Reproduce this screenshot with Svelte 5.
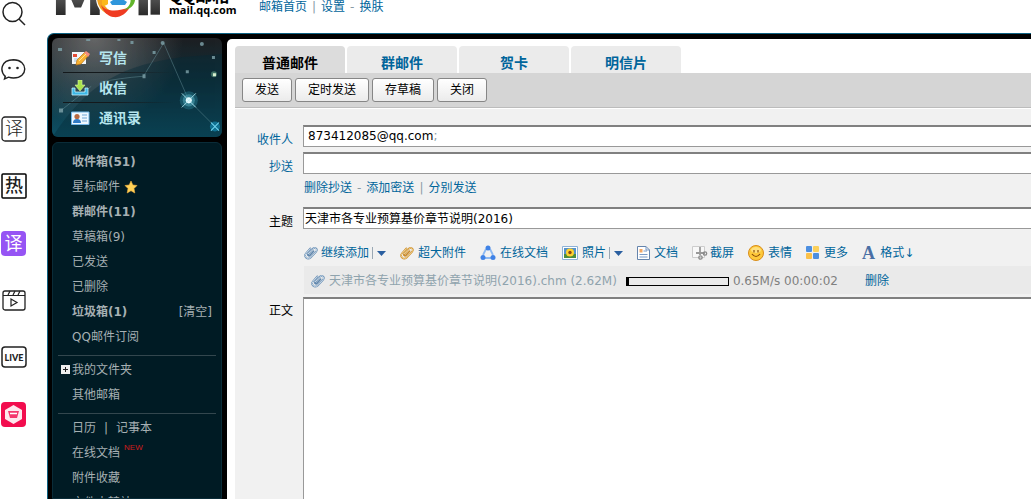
<script lang="ts">
	const dock = ['search', 'chat', 'translate', 'hot', 'translate-alt', 'video', 'live', 'shop'];

	const actions = [
		{ icon: 'write', label: '写信' },
		{ icon: 'inbox', label: '收信' },
		{ icon: 'contacts', label: '通讯录' }
	];

	const folders = [
		{ label: '收件箱(51)', unread: true },
		{ label: '星标邮件', star: true },
		{ label: '群邮件(11)', unread: true },
		{ label: '草稿箱(9)' },
		{ label: '已发送' },
		{ label: '已删除' },
		{ label: '垃圾箱(1)', unread: true, clear: true },
		{ label: 'QQ邮件订阅' }
	];

	const tabs = ['普通邮件', '群邮件', '贺卡', '明信片'];
	const buttons = ['发送', '定时发送', '存草稿', '关闭'];

	// w is the natural width of each icon
	const tools = [
		{ icon: 'clip', w: 13, label: '继续添加', menu: true },
		{ icon: 'clip-gold', w: 14, label: '超大附件' },
		{ icon: 'share', w: 16, label: '在线文档' },
		{ icon: 'photo', w: 16, label: '照片', menu: true },
		{ icon: 'doc', w: 13, label: '文档' },
		{ icon: 'cut', w: 14, label: '截屏' },
		{ icon: 'smile', w: 16, label: '表情' },
		{ icon: 'more', w: 14, label: '更多' },
		{ icon: 'font', w: 14, label: '格式↓' }
	];

	let activeTab = $state(0);
	let to = $state('');
	let cc = $state('');
	let subject = $state('天津市各专业预算基价章节说明(2016)');
	let body = $state('');
	const progress = 2;
</script>

{#snippet clip(color: string, light: string)}
	<g fill="none" stroke-linecap="round" transform="rotate(42 7 8)">
		<path d="M3.500 5v6.500a3.200 3.200 0 0 0 6.400 0V3.500a2.200 2.200 0 0 0-4.400 0V10.500a1 1 0 0 0 2.200 0V5" stroke={color} stroke-width="1.700" />
		<path d="M3.500 5v6.500a3.200 3.200 0 0 0 6.400 0V3.500a2.200 2.200 0 0 0-4.400 0V10.500" stroke={light} stroke-width=".7" />
	</g>
{/snippet}

<div class="page">
	<aside class="dock">
		{#each dock as name}
			<button class="dock-btn" aria-label={name}>
				<svg viewBox="0 0 26 26" fill="none" stroke="#222" stroke-width="1.500">
					{#if name === 'search'}
						<circle cx="11.500" cy="10" r="9.500" />
						<path d="m18 17 6 6" />
					{:else if name === 'chat'}
						<path d="M4.500 18C-1.500 12-.5 1 12.500.700c15 .3 15 18.300 0 18.300-2 0-3.500-.3-5-.8L3.500 20l1-3.500" stroke-width="1.400" />
						<circle cx="8.500" cy="9" r="1.300" fill="#222" stroke="none" />
						<circle cx="16.500" cy="9" r="1.300" fill="#222" stroke="none" />
					{:else if name === 'translate'}
						<rect x="1" y="1" width="24" height="24" rx="3" stroke-width="1.300" />
						<text x="13" y="19" font-size="18" font-weight="300">译</text>
					{:else if name === 'hot'}
						<rect x="1" y="1" width="24" height="24" rx="1" stroke="#000" />
						<text x="13" y="19" font-size="18" font-weight="500">热</text>
					{:else if name === 'translate-alt'}
						<rect y="1" width="25" height="25" rx="4" fill="#9654f4" stroke="none" />
						<text x="12.500" y="20" font-size="18" class="light">译</text>
					{:else if name === 'video'}
						<rect x="2" y="4" width="22" height="19" rx="2" stroke-width="1.300" />
						<path d="M2 8.500h22M7 8l2-4M12 8l2-4M17 8l2-4M10 12v7l6-3.500z" stroke-width="1.200" />
					{:else if name === 'live'}
						<rect x="1" y="3" width="24" height="20" rx="3" />
						<text x="13" y="16.500" font-size="9" class="live">LIVE</text>
					{:else}
						<rect y="1" width="25" height="25" rx="4" fill="#f20d4e" stroke="none" />
						<path d="m12.500 4 8.500 5v9l-8.500 5-8.500-5V9z" fill="#fff" stroke="none" opacity=".9" />
						<path d="M7 10h11l-2 7H9z" fill="#f4376d" stroke="none" />
						<path d="M9 12.500h7" stroke="#fff" />
					{/if}
				</svg>
			</button>
		{/each}
	</aside>

	<div class="wrap">
		<header>
			<svg class="logo" viewBox="0 0 108 20" role="img" aria-label="Mail">
				<defs>
					<linearGradient id="metal" x1="0" y1="0" x2="0" y2="1">
						<stop offset=".5" stop-color="#555" />
						<stop offset=".8" stop-color="#2a2a2a" />
					</linearGradient>
				</defs>
				<g class="logo-text" fill="url(#metal)">
					<text x="-4" y="15">M</text>
					<text x="79" y="15">i</text>
					<text x="91" y="15">l</text>
				</g>
				<circle cx="61" cy="-2" r="20" fill="#fff" />
				<path d="M42-3a19 19 0 0 0 10 17l4-3a15 15 0 0 1-9-14z" fill="#f3a321" />
				<path d="M46 5c5 7 17 7 29 2-4 7-10 11-17 10-6-1-10-6-12-12z" fill="#ef3b22" />
				<path d="M75-4c2 7-1 11-6 14 9-1 12-8 11-14z" fill="#62b52c" />
				<path d="M47-2h6v6q-3 3-6 1z" fill="#fbb81b" />
				<path d="M58-3h11v3l3 2-2 3H57l-2-3 3-2z" fill="#2f96dc" />
			</svg>
			<div class="brand">
				<span class="brand-cn">QQ邮箱</span>
				<span class="brand-url">mail.qq.com</span>
			</div>
			<nav class="top-links">
				<a href="#home">邮箱首页</a><i>|</i><a href="#settings">设置</a><i>-</i><a href="#skin">换肤</a>
			</nav>
		</header>

		<div class="app">
			<aside class="side">
				<div class="card">
					<svg class="stars" viewBox="0 0 169 99" preserveAspectRatio="xMinYMin slice" aria-hidden="true">
						<path d="M0 99C35 45 70 27 130 19L169 16V99H0z" fill="#052a38" opacity=".4" />
						<g stroke="#6f9ba5" stroke-width=".7" fill="none" opacity=".6">
							<path d="m91 38 20-33 25 57 26 26M9 72l30-24M91 38q-25 2-43 6" />
						</g>
						<g fill="#7fa3aa" opacity=".8">
							<path d="M6 10h4v3H6zM34 1h4v2h-4zM65 1h3v2h-3zM78 3h3v3h-3zM100 13h3v3h-3zM133 32h3v3h-3zM159 18h3v3h-3zM90 36h3v4h-3zM7 70h4v4H7z" />
							<circle cx="110" cy="5" r="2" />
							<circle cx="149" cy="6" r="2" />
						</g>
						<circle cx="161" cy="36" r="3" fill="#6bb08f" opacity=".5" />
						<path d="M160 35h3v3h-3z" fill="#d8f0cf" />
						<circle cx="136" cy="62" r="9" fill="#2e91aa" opacity=".35" />
						<circle cx="136" cy="62" r="6" fill="#58afc1" opacity=".5" />
						<circle cx="136" cy="62" r="3" fill="#e5fbff" />
						<path d="m129 55 14 14m0-14-14 14" stroke="#b6eaf3" stroke-width=".8" />
						<circle cx="162" cy="88" r="5" fill="#159dcb" opacity=".55" />
						<path d="m158 84 8 8m0-8-8 8" stroke="#77dbf6" />
					</svg>
					{#each actions as action}
						<a class="action" href="#{action.icon}">
							<svg viewBox="0 0 19 16">
								{#if action.icon === 'write'}
									<path d="M1 2h14v12H1z" fill="#f2f6fa" />
									<path d="M2 4h4v3H2z" fill="#e34b36" />
									<path d="M3 9h5M3 11h4" stroke="#9fc3de" />
									<path d="m5 15 1-5 8-8 4 3-8 9z" fill="#f9b233" stroke="#b87413" stroke-width=".7" />
									<path d="m13 3 2-2 4 3-2 3z" fill="#f48d7d" />
									<path d="m8 11 7-7" stroke="#ffe28a" />
								{:else if action.icon === 'inbox'}
									<path d="M1 8v7h16V8h-3v4H4V8z" fill="#3db7e5" stroke="#c9f2ff" stroke-width=".8" />
									<path d="M7 0h4v5h3l-5 6-5-6h3z" fill="#a8e34b" stroke="#dbf7a4" stroke-width=".6" />
								{:else}
									<path d="M.5 2h17.500v12.500H.5z" fill="#eff8ff" stroke="#73b6e7" />
									<circle cx="6" cy="6.500" r="2.600" fill="#b76a42" />
									<path d="M2 13q0-4 4-4t4 4z" fill="#317bc4" />
									<path d="M11 5h5M11 8h5M11 11h5" stroke="#70a7d5" />
								{/if}
							</svg>
							{action.label}
						</a>
					{/each}
				</div>

				<nav class="menu">
					{#each folders as folder}
						<div class="row" class:unread={folder.unread}>
							<a href="#folder">{folder.label}</a>
							{#if folder.star}
								<svg class="star" viewBox="0 0 14 14"><path d="m7 1 1.800 4 4.200.5-3 3 .8 4.500L7 10.700 3.200 13 4 8.500l-3-3L5.200 5z" fill="#ffd257" stroke="#f7b541" stroke-width=".6" /></svg>
							{/if}
							{#if folder.clear}
								<a class="clear" href="#clear">[清空]</a>
							{/if}
						</div>
					{/each}
					<hr />
					<div class="row">
						<button class="expand" aria-label="展开">
							<svg viewBox="0 0 9 9"><path d="M0 0h9v9H0z" fill="#eee" /><path d="M2 4.500h5M4.500 2v5" stroke="#222" /></svg>
						</button>
						<a href="#myfolders">我的文件夹</a>
					</div>
					<div class="row"><a href="#other">其他邮箱</a></div>
					<hr />
					<div class="row split"><a href="#calendar">日历</a><span>|</span><a href="#notes">记事本</a></div>
					<div class="row"><a href="#docs">在线文档</a><sup>NEW</sup></div>
					<div class="row"><a href="#attach">附件收藏</a></div>
					<div class="row"><a href="#station">文件中转站</a></div>
				</nav>
			</aside>

			<main>
				<div class="tabs">
					{#each tabs as tab, i}
						<button class="tab" class:active={activeTab === i} onclick={() => (activeTab = i)}>{tab}</button>
					{/each}
				</div>
				<div class="toolbar">
					{#each buttons as label}
						<button>{label}</button>
					{/each}
				</div>

				<form onsubmit={(e) => e.preventDefault()}>
					<label class="link" for="to">收件人</label>
					<div class="box field">
						<span class="addr">873412085@qq.com<i>;</i></span>
						<input id="to" bind:value={to} />
					</div>

					<label class="link" for="cc">抄送</label>
					<input class="box field" id="cc" bind:value={cc} />

					<div class="extra">
						<a href="#delcc">删除抄送</a><i>-</i><a href="#bcc">添加密送</a><i>|</i><a href="#separate">分别发送</a>
					</div>

					<label for="subject">主题</label>
					<input class="box field" id="subject" bind:value={subject} />

					<div class="tools">
						{#each tools as tool}
							<div class="tool">
								<a href="#{tool.icon}">
									<svg width={tool.w} height="16" viewBox="0 0 {tool.w} 16">
										{#if tool.icon === 'clip'}
											{@render clip('#5f86ad', '#e4f0fa')}
										{:else if tool.icon === 'clip-gold'}
											{@render clip('#c88a2c', '#ffe6a0')}
										{:else if tool.icon === 'share'}
											<path d="M6 4 3 10M10 4l3 6M5 13h6" stroke="#8db9f2" stroke-width="1.800" fill="none" />
											<g fill="#3f82e6"><circle cx="8" cy="3" r="2.500" /><circle cx="3" cy="12.500" r="2.500" /><circle cx="13" cy="12.500" r="2.500" /></g>
										{:else if tool.icon === 'photo'}
											<path d="M.5 1.500h15v13H.5z" fill="#fff" stroke="#8db2d8" />
											<path d="M2 3h12v10H2z" fill="#5592c9" />
											<path d="M2 9h12v4H2z" fill="#4d8c3d" />
											<circle cx="8" cy="7.500" r="4" fill="#ffd22e" /><circle cx="8" cy="7.500" r="1.700" fill="#8b4a12" />
										{:else if tool.icon === 'doc'}
											<path d="M.5 1.500H9l3.500 3.500v9.500H.5z" fill="#fff" stroke="#6584ac" />
											<path d="M9 1.500V5h3.500M6.500 6H10M2.500 9.500h8M2.500 12h8" stroke="#7899c5" fill="none" />
											<path d="M2.500 4h3v3.500h-3z" fill="#f3a865" />
										{:else if tool.icon === 'cut'}
											<path d="M.5 1.500h12v11H.5z" fill="#f8f8f8" stroke="#ccc" />
											<path d="M8 2v8M4 8h9" stroke="#999" stroke-width="1.800" />
											<circle cx="8.500" cy="12.500" r="1.700" fill="none" stroke="#8a8a8a" stroke-width="1.300" />
											<circle cx="13" cy="8.500" r="1.700" fill="none" stroke="#8a8a8a" stroke-width="1.300" />
										{:else if tool.icon === 'smile'}
											<circle cx="8" cy="8" r="7.500" fill="#fdc93b" stroke="#d98d1b" />
											<ellipse cx="8" cy="5" rx="5" ry="3" fill="#ffe99a" opacity=".7" />
											<path d="M6 5v2.500M10 5v2.500M4 9q4 5 8 0" stroke="#8d4d0a" stroke-width="1.200" fill="none" />
										{:else if tool.icon === 'more'}
											<rect y="1" width="6" height="6" rx="1" fill="#4d8fe0" /><rect x="7" y="1" width="6" height="6" rx="1" fill="#fbd05b" />
											<rect y="8" width="6" height="6" rx="1" fill="#fbc14a" /><rect x="7" y="8" width="6" height="6" rx="1" fill="#4d8fe0" />
										{:else}
											<text x="0" y="14" class="font-a">A</text>
										{/if}
									</svg>
									{tool.label}
								</a>
								{#if tool.menu}
									<button class="caret" aria-label="更多选项"><svg viewBox="0 0 9 5"><path d="M0 0h9L4.500 5z" fill="#2a5fa0" /></svg></button>
								{/if}
							</div>
						{/each}
					</div>

					<div class="attachment">
						<svg width="14" height="16" viewBox="0 0 14 16">{@render clip('#5f86ad', '#e4f0fa')}</svg>
						<span class="name">天津市各专业预算基价章节说明(2016).chm (2.62M)</span>
						<div class="bar"><div style="width: {progress}%"></div></div>
						<span class="speed">0.65M/s 00:00:02</span>
						<a href="#remove">删除</a>
					</div>

					<label class="body-label" for="body">正文</label>
					<textarea class="box" id="body" bind:value={body}></textarea>
				</form>
			</main>
		</div>
	</div>
</div>

<style>
	:global(body) {
		margin: 0;
		background: #fff;
	}
	.page {
		display: flex;
		height: 100vh;
		overflow: hidden;
		font: 12px/16px 'DejaVu Sans', 'Noto Sans CJK SC', sans-serif;
		color: #000;
	}
	.page * {
		box-sizing: border-box;
	}
	button,
	input,
	textarea {
		font: inherit;
	}
	a {
		color: #00659b;
		text-decoration: none;
	}
	i {
		font-style: normal;
		color: #8a9ba5;
	}
	svg {
		display: block;
		flex: none;
	}

	/* left launcher */
	.dock {
		display: flex;
		flex-direction: column;
		flex: none;
		gap: 31px;
		width: 47px;
		padding: 2px 1px;
	}
	.dock-btn {
		flex: none;
		width: 26px;
		height: 26px;
		padding: 0;
		border: 0;
		background: none;
	}
	.dock-btn svg {
		overflow: visible;
	}
	.dock-btn text {
		font-family: 'Noto Sans CJK SC', sans-serif;
		text-anchor: middle;
		fill: #222;
		stroke: none;
	}
	.dock-btn .light {
		fill: #fff;
	}
	.dock-btn .live {
		font-family: Lato, sans-serif;
		font-weight: 900;
	}

	.wrap {
		display: flex;
		flex-direction: column;
		flex: 1;
		min-width: 0;
	}
	header {
		display: flex;
		flex: none;
		height: 33px;
		padding-left: 8px;
	}
	.logo {
		width: 108px;
		height: 20px;
	}
	.logo-text {
		font-family: 'DejaVu Sans', sans-serif;
		font-weight: bold;
		font-size: 54px;
	}
	.brand {
		display: flex;
		flex-direction: column;
		justify-content: flex-end;
		width: 96px;
		height: 16px;
		padding-left: 6px;
		white-space: nowrap;
	}
	.brand-cn {
		font: bold 17px/18px 'Noto Sans CJK SC', sans-serif;
	}
	.brand-url {
		font: bold 11px/12px 'Open Sans', sans-serif;
	}
	.top-links {
		height: 16px;
		margin-top: -1px;
	}
	.top-links i,
	.extra i {
		margin: 0 5px;
	}

	.app {
		display: flex;
		flex: 1;
		min-height: 0;
		border-top: 1px solid #0d6283;
		border-left: 1px solid #0d6283;
		border-radius: 7px 0 0;
		background: #000;
	}
	.side {
		display: flex;
		flex-direction: column;
		flex: none;
		gap: 5px;
		width: 179px;
		padding: 4px 5px 0 4px;
	}
	.card {
		position: relative;
		flex: none;
		height: 99px;
		padding: 5px 0 0 11px;
		overflow: hidden;
		border-radius: 6px;
		background:
			radial-gradient(circle at 25% 0, #777c 0, transparent 55%),
			linear-gradient(#1d1f22, #0f303c 45%, #0d5064);
	}
	.stars {
		position: absolute;
		inset: 0;
		width: 100%;
		height: 100%;
	}
	.action {
		position: relative;
		display: flex;
		align-items: center;
		gap: 9px;
		height: 30px;
		padding-left: 8px;
		font-size: 14px;
		font-weight: bold;
		color: #b5e5ee;
	}
	.action:not(:last-child) {
		border-bottom: 1px solid;
		border-image: linear-gradient(90deg, #14191c 30%, transparent 70%) 1;
	}
	.action svg {
		width: 19px;
		height: 16px;
	}
	.menu {
		flex: 1;
		min-height: 0;
		padding: 6px 5px;
		overflow: hidden;
		border: 1px solid #0a2c38;
		border-radius: 6px 6px 0 0;
		background: #001b24;
	}
	.row {
		position: relative;
		display: flex;
		align-items: center;
		height: 25px;
		padding: 0 4px 0 14px;
		color: #a6b0b3;
		white-space: nowrap;
	}
	.row a {
		color: inherit;
	}
	.row.unread {
		font-weight: bold;
	}
	.row .clear {
		margin-left: auto;
		font-weight: normal;
	}
	.star {
		width: 14px;
		height: 14px;
		margin-left: 4px;
	}
	.split {
		gap: 8px;
	}
	sup {
		align-self: flex-start;
		margin-left: 4px;
		font: 8px/16px 'Liberation Sans', sans-serif;
		color: #d01c1c;
	}
	.expand {
		position: absolute;
		left: 3px;
		width: 9px;
		height: 9px;
		padding: 0;
		border: 0;
		background: none;
	}
	hr {
		height: 1px;
		margin: 6px 0 1px;
		border: 0;
		background: #33474e;
	}

	main {
		display: flex;
		flex-direction: column;
		flex: 1;
		min-width: 0;
		margin-top: 5px;
		padding: 7px 0 0 8px;
		overflow: hidden;
		border-radius: 5px 0 0;
		background: #fff;
	}
	.tabs {
		display: flex;
		flex: none;
		gap: 2px;
	}
	.tab {
		width: 110px;
		height: 27px;
		padding: 7px 0 0;
		border: 0;
		border-radius: 4px 4px 0 0;
		background: #ebebeb;
		font-size: 14px;
		font-weight: bold;
		line-height: 20px;
		color: #00659b;
	}
	.tab.active {
		background: #dcdcdc;
		color: #000;
	}
	.toolbar {
		display: flex;
		flex: none;
		align-items: center;
		gap: 3px;
		height: 35px;
		padding-left: 7px;
		border-bottom: 1px solid #bcbcbc;
		background: #d5d5d5;
	}
	.toolbar button {
		height: 24px;
		padding: 0 12px;
		border: 1px solid #868686;
		border-radius: 3px;
		background: linear-gradient(#fff, #ebebeb);
		line-height: 20px;
	}

	/* fields run on past the right edge, so the form has no right border */
	form {
		display: grid;
		grid-template-columns: 58px 1fr;
		grid-template-rows: repeat(6, auto) 1fr;
		column-gap: 10px;
		flex: 1;
		min-height: 0;
		margin: 0 -2px -2px 0;
		padding-top: 16px;
		border-top: 1px solid #fff;
		background: #f1f1f1;
	}
	label {
		padding-top: 7px;
		text-align: right;
	}
	.link {
		color: #00659b;
	}
	.box {
		min-width: 0;
		border: 1px solid #999;
		border-top: 2px solid #808080;
		border-radius: 0;
		background: #fff;
		outline: 0;
	}
	.field {
		display: flex;
		height: 22px;
		margin-bottom: 5px;
		padding: 0 1px 2px;
	}
	.addr {
		padding: 1px 0 0 3px;
	}
	.field input {
		flex: 1;
		min-width: 0;
		padding: 0;
		border: 0;
		outline: 0;
	}
	.extra {
		grid-column: 2;
		height: 28px;
		padding: 1px 0 0 1px;
	}
	.tools {
		display: flex;
		grid-column: 2;
		align-items: center;
		gap: 14px;
		height: 32px;
		padding: 6px 0 0 1px;
		white-space: nowrap;
	}
	.tool,
	.tool a {
		display: flex;
		align-items: center;
	}
	.tool a {
		gap: 4px;
	}
	.tool svg {
		overflow: visible;
	}
	.font-a {
		font: bold 18px 'Liberation Serif', serif;
		fill: #4a6fa5;
	}
	.caret {
		height: 12px;
		margin-left: 3px;
		padding: 0 0 0 4px;
		border: 0;
		border-left: 1px solid #9aa8b4;
		background: none;
	}
	.caret svg {
		width: 9px;
		height: 5px;
	}
	.attachment {
		display: flex;
		grid-column: 2;
		align-items: center;
		height: 28px;
		margin: 0 0 3px 1px;
		padding: 2px 0 0 7px;
		background: #eaeaea;
		white-space: nowrap;
	}
	.name {
		margin: 0 9px 0 4px;
		color: #8fa3ad;
	}
	.bar {
		width: 103px;
		height: 9px;
		margin-right: 4px;
		border: 1px solid #000;
	}
	.bar div {
		height: 100%;
		background: #000;
	}
	.speed {
		margin-right: 27px;
		color: #808080;
	}
	.body-label {
		padding-top: 6px;
	}
	textarea {
		width: 100%;
		height: 100%;
		padding: 4px;
		resize: none;
	}
</style>
